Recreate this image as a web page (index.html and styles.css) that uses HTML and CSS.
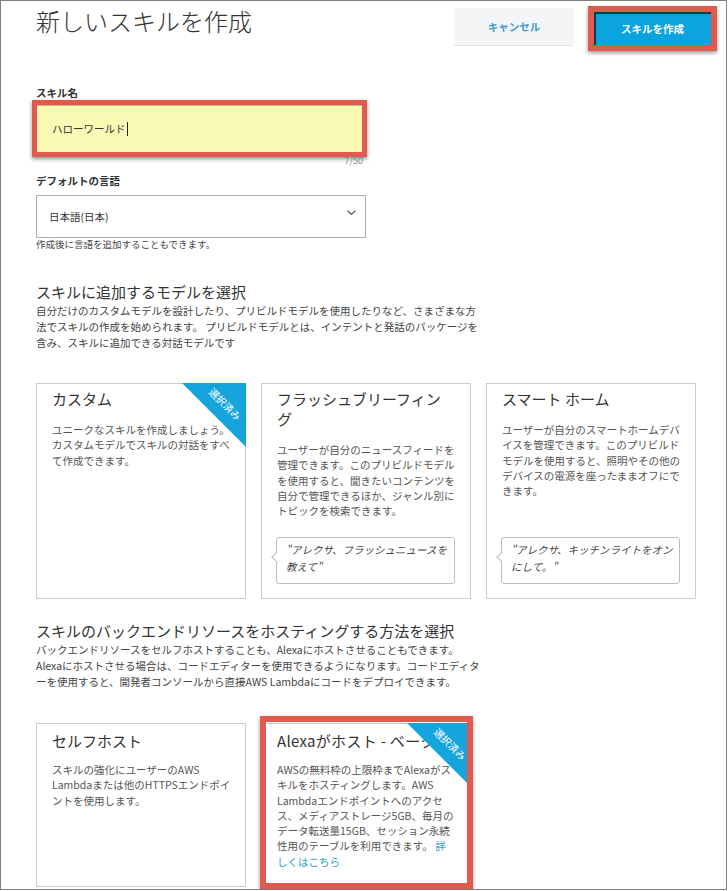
FILE: index.html
```html
<!DOCTYPE html>
<html lang="ja">
<head>
<meta charset="utf-8">
<title>新しいスキルを作成</title>
<link rel="stylesheet" href="styles.css">
</head>
<body>
<div class="frame">
  <header class="top">
    <h1 class="page-title">新しいスキルを作成</h1>
    <div class="actions">
      <button class="btn-cancel">キャンセル</button>
      <button class="btn-create">スキルを作成</button>
    </div>
  </header>

  <section class="fields">
    <label class="field-label name-label">スキル名</label>
    <div class="name-input"><span>ハローワールド</span><span class="caret"></span></div>
    <div class="counter">7/50</div>
    <label class="field-label lang-label">デフォルトの言語</label>
    <div class="select">
      <span>日本語(日本)</span>
      <svg class="chev" width="9" height="5" viewBox="0 0 9 5"><polyline points="0.6,0.6 4.5,4.4 8.4,0.6" fill="none" stroke="#444" stroke-width="1.1"/></svg>
    </div>
    <p class="helper">作成後に言語を追加することもできます。</p>
  </section>

  <section class="block">
    <h2 class="section-title">スキルに追加するモデルを選択</h2>
    <p class="desc">自分だけのカスタムモデルを設計したり、プリビルドモデルを使用したりなど、さまざまな方<br>法でスキルの作成を始められます。 プリビルドモデルとは、インテントと発話のパッケージを<br>含み、スキルに追加できる対話モデルです</p>
    <div class="cards">
      <div class="card">
        <div class="ribbon"><span>選択済み</span></div>
        <h3 class="card-title">カスタム</h3>
        <p class="card-text">ユニークなスキルを作成しましょう。カスタムモデルでスキルの対話をすべて作成できます。</p>
      </div>
      <div class="card">
        <h3 class="card-title">フラッシュブリーフィング</h3>
        <p class="card-text">ユーザーが自分のニュースフィードを管理できます。このプリビルドモデルを使用すると、聞きたいコンテンツを自分で管理できるほか、ジャンル別にトピックを検索できます。</p>
        <div class="quote">"アレクサ、フラッシュニュースを<br>教えて"</div>
      </div>
      <div class="card">
        <h3 class="card-title">スマート ホーム</h3>
        <p class="card-text">ユーザーが自分のスマートホームデバイスを管理できます。このプリビルドモデルを使用すると、照明やその他のデバイスの電源を座ったままオフにできます。</p>
        <div class="quote">"アレクサ、キッチンライトをオン<br>にして。"</div>
      </div>
    </div>
  </section>

  <section class="block">
    <h2 class="section-title second">スキルのバックエンドリソースをホスティングする方法を選択</h2>
    <p class="desc">バックエンドリソースをセルフホストすることも、Alexaにホストさせることもできます。<br>Alexaにホストさせる場合は、コードエディターを使用できるようになります。コードエディタ<br>ーを使用すると、開発者コンソールから直接AWS Lambdaにコードをデプロイできます。</p>
    <div class="cards hosting">
      <div class="card short">
        <h3 class="card-title">セルフホスト</h3>
        <p class="card-text">スキルの強化にユーザーのAWS<br>Lambdaまたは他のHTTPSエンドポイ<br>ントを使用します。</p>
      </div>
      <div class="card short annotated">
        <h3 class="card-title alexa-title">Alexaがホスト - ベータ</h3>
        <div class="ribbon"><span>選択済み</span></div>
        <p class="card-text">AWSの無料枠の上限枠までAlexaがス<br>キルをホスティングします。AWS<br>Lambdaエンドポイントへのアクセ<br>ス、メディアストレージ5GB、毎月の<br>データ転送量15GB、セッション永続<br>性用のテーブルを利用できます。 <a class="link" href="#">詳<br>しくはこちら</a></p>
      </div>
    </div>
  </section>
</div>
</body>
</html>
```

FILE: styles.css
```css
* { box-sizing: border-box; }

html, body {
  margin: 0;
  background: #fff;
}

body {
  font-family: "Noto Sans CJK JP", "Noto Sans", sans-serif;
  color: #333;
}

.frame {
  width: 727px;
  height: 890px;
  border: 1px solid #808080;
  overflow: hidden;
  padding-left: 35px;
}

/* header */
.top {
  display: flex;
  align-items: flex-start;
  padding-top: 5px;
}

.page-title {
  margin: 0;
  font-size: 24px;
  line-height: 30px;
  font-weight: 300;
  color: #333;
}

.actions {
  margin-left: auto;
  display: flex;
  align-items: flex-start;
}

.btn-cancel {
  margin: 2px 14px 0 0;
  width: 120px;
  height: 38px;
  background: #f3f5f6;
  border: 0;
  border-bottom: 1px solid #e1e5e7;
  color: #3d9ccb;
  font-family: "Noto Sans CJK JP", sans-serif;
  font-size: 10.5px;
  font-weight: 700;
  padding: 0;
}

.btn-create {
  margin-right: 9px;
  width: 129px;
  height: 45px;
  border: 6px solid #e05b4e;
  background: #0aa5de;
  box-shadow: inset 2px 2px 1px rgba(14, 36, 52, 0.85), 0 2px 4px rgba(0, 0, 0, 0.4);
  color: #fff;
  font-family: "Noto Sans CJK JP", sans-serif;
  font-size: 10.5px;
  font-weight: 700;
  padding: 0;
}

/* fields */
.fields { width: 330px; }

.field-label {
  display: block;
  font-size: 10.5px;
  line-height: 14px;
  font-weight: 700;
  color: #333;
}

.name-label { margin-top: 35px; }

.name-input {
  margin-left: -4px;
  width: 335px;
  height: 57px;
  border: 5px solid #e05b4e;
  background: #fafab4;
  box-shadow: inset 0 1px 0 rgba(0, 0, 0, 0.25), 0 2px 4px rgba(0, 0, 0, 0.45);
  display: flex;
  align-items: center;
  padding-left: 15px;
  font-size: 10.5px;
  color: #333;
}

.caret {
  width: 1px;
  height: 14px;
  background: #222;
  margin-left: 1px;
}

.counter {
  text-align: right;
  padding-right: 3px;
  font-size: 9px;
  line-height: 8px;
  color: #888;
}

.lang-label { margin-top: 9px; }

.select {
  margin-top: 7px;
  height: 43px;
  border: 1px solid #aeaeae;
  display: flex;
  align-items: center;
  justify-content: space-between;
  padding: 0 9px 0 12px;
  font-size: 10.5px;
  color: #333;
}

.chev { margin-bottom: 8px; }

.helper {
  margin: 0;
  font-size: 9.5px;
  line-height: 12px;
  color: #444;
}

/* sections */
.section-title {
  margin: 31px 0 0;
  font-size: 15px;
  line-height: 22px;
  font-weight: 400;
  color: #333;
}

.section-title.second { margin-top: 21px; }

.desc {
  margin: 0;
  width: 470px;
  font-size: 10.5px;
  line-height: 16px;
  color: #444;
}

.cards {
  display: flex;
  gap: 15px;
  margin-top: 32px;
}

.cards.hosting { margin-top: 33px; }

.card {
  position: relative;
  width: 210px;
  height: 216px;
  border: 1px solid #cccccc;
  padding: 5px 14px 14px 15px;
  display: flex;
  flex-direction: column;
  background: #fff;
}

.card.short { height: 164px; }

.card-title {
  margin: 0;
  max-width: 172px;
  font-size: 15px;
  line-height: 20px;
  font-weight: 400;
  color: #333;
}

.alexa-title {
  max-width: none;
  letter-spacing: 0.3px;
  white-space: nowrap;
}

.card-text {
  margin: 13px 0 0;
  font-size: 10.5px;
  line-height: 15.3px;
  color: #555;
}

.short .card-title { margin-top: 2px; }
.short .card-text { margin-top: 11px; }

.link {
  color: #2a9fd0;
  text-decoration: none;
}

.quote {
  position: relative;
  margin-top: auto;
  margin-left: -1px;
  width: 179px;
  border: 1px solid #bdbdbd;
  border-radius: 3px;
  padding: 4px 4px 8px 9px;
  font-size: 10.5px;
  line-height: 16.5px;
  font-style: italic;
  color: #444;
  background: #fff;
}

.quote::before {
  content: "";
  position: absolute;
  left: -4.5px;
  top: 15px;
  width: 7px;
  height: 7px;
  background: #fff;
  border-left: 1px solid #bdbdbd;
  border-bottom: 1px solid #bdbdbd;
  transform: rotate(45deg);
}

/* selected ribbon */
.ribbon {
  position: absolute;
  top: -1px;
  right: -1px;
  width: 64px;
  height: 64px;
  background: #15a5dc;
  clip-path: polygon(0 0, 100% 0, 100% 100%);
}

.ribbon span {
  position: absolute;
  left: 18px;
  top: 15px;
  width: 50px;
  text-align: center;
  font-size: 10px;
  line-height: 12px;
  color: #fff;
  white-space: nowrap;
  transform: rotate(45deg);
}

/* red annotation box drawn over the hosted card */
.annotated::after {
  content: "";
  position: absolute;
  top: -8px;
  left: -2px;
  right: -3px;
  bottom: -3px;
  border: 6px solid #e05b4e;
  box-shadow: 0 2px 4px rgba(0, 0, 0, 0.4);
  pointer-events: none;
}
```
